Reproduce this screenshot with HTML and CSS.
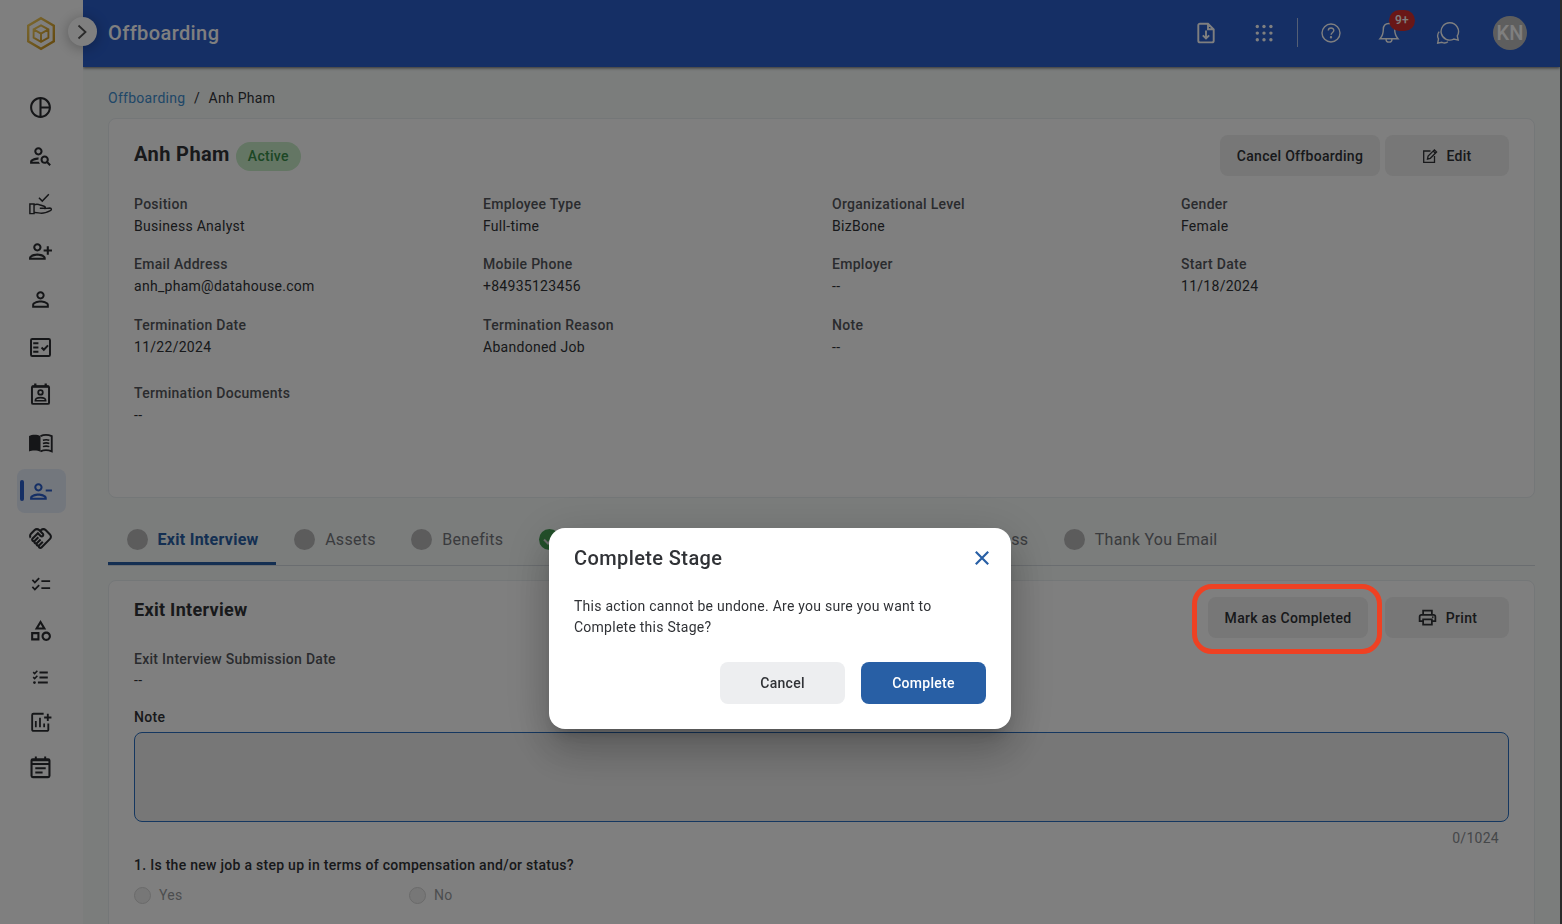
FILE: index.html
```html
<!DOCTYPE html>
<html lang="en">
<head>
    <meta charset="UTF-8">
    <meta name="viewport" content="width=device-width, initial-scale=1.0">
    <title>Offboarding</title>
    <link rel="stylesheet" href="styles.css">
</head>
<body>
    <div class="app">
        <aside class="sidebar">
            <div class="logo">
                <svg width="30" height="35" viewBox="0 0 30 35" fill="none">
                    <defs>
                        <linearGradient id="gold" x1="0" y1="0" x2="1" y2="1">
                            <stop offset="0" stop-color="#f5d060"/>
                            <stop offset="1" stop-color="#c8901c"/>
                        </linearGradient>
                    </defs>
                    <path d="M15 2.2 27.8 9.6v15.8L15 32.8 2.2 25.4V9.6z" stroke="url(#gold)" stroke-width="2.4"/>
                    <path d="M15 9.3 22.4 13.4v8.2L15 25.8 7.6 21.6v-8.2zM7.6 13.4 15 17.6l7.4-4.2M15 17.6v8.2" stroke="url(#gold)" stroke-width="1.9"/>
                </svg>
            </div>
            <nav class="menu">
                <a class="menu-item"><svg class="icon" viewBox="0 0 24 24"><path d="M12 2C6.48 2 2 6.48 2 12s4.480 10 10 10 10-4.480 10-10S17.520 2 12 2zm1 2.070c3.610.450 6.480 3.330 6.930 6.930H13V4.070zM4 12c0-4.060 3.070-7.440 7-7.930v15.870c-3.930-.500-7-3.880-7-7.940zm9 7.930V13h6.930c-.450 3.610-3.320 6.480-6.930 6.930z"/></svg></a>
                <a class="menu-item"><svg class="icon" viewBox="0 0 24 24"><path d="M10 12c2.21 0 4-1.79 4-4s-1.79-4-4-4-4 1.790-4 4 1.790 4 4 4zm0-6c1.100 0 2 .900 2 2s-.900 2-2 2-2-.900-2-2 .900-2 2-2zM4 18c.220-.720 3.310-2 6-2 0-.700.130-1.370.350-1.990C7.620 13.910 2 15.270 2 18v2h9.540c-.520-.580-.930-1.250-1.190-2H4zm15.430.020c.360-.590.570-1.280.570-2.020 0-2.210-1.790-4-4-4s-4 1.790-4 4 1.790 4 4 4c.740 0 1.430-.220 2.020-.570L20.590 22 22 20.590l-2.570-2.570zM16 18c-1.100 0-2-.900-2-2s.900-2 2-2 2 .900 2 2-.900 2-2 2z"/></svg></a>
                <a class="menu-item"><svg class="icon line" viewBox="0 0 24 24"><path d="M1.800 12.500h4v9.200h-4zM5.800 13.300c2-.800 4-.800 6 .200l3.700 1.100c1.500.500 1.300 2-.200 2h-4M15.500 16.900l5.500-.500c1.700 0 2 1.700.500 2.400-3 1.500-5.500 2.600-8.500 2.600-2.500 0-4.500-1-7.200-.700M10.500 6.500l3.200 3.200 6.300-6.500"/></svg></a>
                <a class="menu-item"><svg class="icon" viewBox="0 0 24 24"><path d="M13 8c0-2.210-1.790-4-4-4S5 5.790 5 8s1.790 4 4 4 4-1.790 4-4zm-2 0c0 1.100-.900 2-2 2s-2-.900-2-2 .900-2 2-2 2 .900 2 2zM1 18v2h16v-2c0-2.660-5.330-4-8-4s-8 1.340-8 4zm2 0c.200-.710 3.300-2 6-2 2.690 0 5.770 1.280 6 2H3zm17-3v-3h3v-2h-3V7h-2v3h-3v2h3v3h2z"/></svg></a>
                <a class="menu-item"><svg class="icon" viewBox="0 0 24 24"><path d="M12 5.900c1.160 0 2.100.940 2.100 2.100s-.940 2.100-2.100 2.100S9.900 9.160 9.900 8s.940-2.100 2.100-2.100m0 9c2.970 0 6.100 1.460 6.100 2.100v1.100H5.900V17c0-.640 3.130-2.100 6.100-2.100M12 4C9.790 4 8 5.790 8 8s1.790 4 4 4 4-1.790 4-4-1.790-4-4-4zm0 9c-2.670 0-8 1.340-8 4v3h16v-3c0-2.660-5.330-4-8-4z"/></svg></a>
                <a class="menu-item"><svg class="icon line" viewBox="0 0 24 24"><rect x="2.900" y="3.900" width="18.200" height="16.200" rx="1.200" stroke-width="1.900"/><path d="M5 8h5M5 12h5M5 16h5M13 12l2.200 2.200 4-4.200" stroke-width="1.900"/></svg></a>
                <a class="menu-item lift"><svg class="icon line" viewBox="0 0 24 24"><rect x="3.800" y="4" width="16.400" height="17" rx="1.200" stroke-width="1.900"/><path d="M7 1.500V4M17 1.500V4M4 4.500h16" stroke-width="2.200"/><circle cx="12" cy="10" r="2.200" stroke-width="1.700"/><path d="M7 18c0-2 2.500-3 5-3s5 1 5 3z" stroke-width="1.500"/></svg></a>
                <a class="menu-item"><svg class="icon line" viewBox="0 0 24 24"><path d="M1 4.800C4 3.300 9 3.300 12 5v15c-3-1.700-8-1.700-11-.300z" fill="currentColor" stroke="none"/><path d="M12 5c3-1.500 7.500-1.500 10.800 0v14.500c-3.300-1.300-7.800-1.300-10.800 0" stroke-width="1.800"/><path d="M14.300 8.800c2-.600 4.300-.600 6.200 0M14.300 11.900c2-.600 4.300-.600 6.200 0M14.300 15c2-.600 4.300-.600 6.200 0" stroke-width="1.500"/></svg></a>
                <a class="menu-item active"><svg class="icon" viewBox="0 0 24 24"><path d="M14 8c0-2.210-1.790-4-4-4S6 5.790 6 8s1.790 4 4 4 4-1.790 4-4zm-2 0c0 1.100-.900 2-2 2s-2-.900-2-2 .900-2 2-2 2 .900 2 2zM2 18v2h16v-2c0-2.660-5.330-4-8-4s-8 1.340-8 4zm2 0c.200-.710 3.300-2 6-2 2.690 0 5.770 1.280 6 2H4zM17 10v2h6v-2z"/></svg></a>
                <a class="menu-item small"><svg class="icon" viewBox="0 0 24 24"><path d="M12.220 19.850c-.180.180-.500.210-.710 0-.180-.180-.210-.500 0-.710l3.390-3.390-1.410-1.410-3.390 3.390c-.190.200-.510.190-.710 0-.210-.210-.180-.530 0-.710l3.390-3.390-1.410-1.410-3.390 3.390c-.180.180-.500.210-.710 0-.190-.190-.190-.510 0-.710l3.390-3.390L9.240 10.100l-3.390 3.390c-.180.180-.500.210-.710 0-.190-.200-.190-.510 0-.710L9.520 8.400l1.870 1.860c.950.950 2.590.940 3.540 0 .980-.980.980-2.560 0-3.540l-1.860-1.860.280-.280c.780-.780 2.050-.780 2.830 0l4.240 4.240c.780.780.780 2.050 0 2.830zM21.830 13.070c1.560-1.560 1.560-4.090 0-5.660l-4.240-4.240c-1.560-1.560-4.090-1.560-5.660 0l-.280.280-.280-.280c-1.560-1.560-4.090-1.560-5.660 0L2.170 6.710c-1.420 1.420-1.550 3.630-.400 5.190l1.450-1.450c-.390-.750-.260-1.700.370-2.330l3.540-3.540c.780-.780 2.050-.780 2.830 0l3.560 3.560c.180.180.210.500 0 .710-.210.210-.530.180-.710 0L9.520 5.570l-5.800 5.790c-.980.970-.980 2.560 0 3.540.390.390.890.630 1.420.700.070.520.300 1.020.700 1.420.400.400.900.630 1.420.700.070.520.300 1.020.700 1.420.400.400.900.630 1.420.700.070.540.310 1.030.700 1.420.470.470 1.100.730 1.770.730s1.300-.260 1.770-.730z"/></svg></a>
                <a class="menu-item small"><svg class="icon icon-sm" viewBox="0 0 24 24"><path d="M23 7h-10v2h10V7zm0 8h-10v2h10v-2zM5.540 11L2 7.460l1.410-1.410 2.120 2.120 4.240-4.240 1.410 1.410L5.540 11zm0 8L2 15.460l1.410-1.410 2.120 2.120 4.240-4.240 1.410 1.410L5.540 19z"/></svg></a>
                <a class="menu-item small"><svg class="icon" viewBox="0 0 24 24"><path d="M12 2l-5.500 9h11L12 2zm0 3.840L13.930 9h-3.870L12 5.840zM17.500 13c-2.490 0-4.500 2.010-4.500 4.500s2.010 4.500 4.500 4.500 4.500-2.010 4.500-4.500-2.010-4.500-4.500-4.500zm0 7c-1.380 0-2.500-1.120-2.500-2.500s1.120-2.500 2.500-2.500 2.500 1.120 2.500 2.500-1.120 2.500-2.500 2.500zM3 21.500h8v-8H3v8zm2-6h4v4H5v-4z"/></svg></a>
                <a class="menu-item small"><svg class="icon line" viewBox="0 0 24 24"><path d="M11 8.200h8M11 13h8M9.500 17.800H19" stroke-width="1.900"/><path d="M5 7.800l1.400 1.400L9 6.500M5 12.600l1.400 1.400L9 11.300" stroke-width="1.500"/><circle cx="6.200" cy="17.800" r="1.300" fill="currentColor" stroke="none"/></svg></a>
                <a class="menu-item small lift"><svg class="icon line" viewBox="0 0 24 24"><path d="M15 4.500H5.200a1.200 1.200 0 0 0-1.200 1.200v14.100a1.200 1.200 0 0 0 1.200 1.200h13.100a1.200 1.200 0 0 0 1.200-1.200V14M19 4.500v7M15.500 8.200h7" stroke-width="1.800"/><path d="M7.500 11.500v6M11.500 8.500v9M15.500 14v3.500" stroke-width="1.700"/></svg></a>
                <a class="menu-item small lift"><svg class="icon line" viewBox="0 0 24 24"><rect x="3.400" y="4" width="17.200" height="17.200" rx="1.200" stroke-width="2"/><path d="M7.500 1.500V4M16.500 1.500V4M3.500 5h17M3.500 8.700h17M7 12.800h10M7 16.800h7" stroke-width="1.900"/></svg></a>
            </nav>
            <button class="toggle" aria-label="Expand menu">
                <svg width="16" height="16" viewBox="0 0 16 16" fill="none" stroke="#555" stroke-width="1.800"><path d="M4.500 1.500 11.500 8l-7 6.500"/></svg>
            </button>
        </aside>

        <div class="main">
            <header class="topbar">
                <h1>Offboarding</h1>
                <div class="actions">
                    <svg width="24" height="24" viewBox="0 0 24 24" stroke-width="1.900"><path d="M14 2.700H6A1.700 1.700 0 0 0 4.300 4.400v15.300A1.700 1.700 0 0 0 6 21.400h12a1.700 1.700 0 0 0 1.700-1.700V8.300zM14 3v5.300h5.500M12 9.500v8M8.800 14.300l3.200 3.200 3.200-3.200"/></svg>
                    <svg class="dots" width="24" height="24" viewBox="0 0 24 24"><circle cx="5.300" cy="5.500" r="1.700"/><circle cx="12" cy="5.500" r="1.700"/><circle cx="18.900" cy="5.500" r="1.700"/><circle cx="5.300" cy="12.100" r="1.700"/><circle cx="12" cy="12.100" r="1.700"/><circle cx="18.900" cy="12.100" r="1.700"/><circle cx="5.300" cy="18.700" r="1.700"/><circle cx="12" cy="18.700" r="1.700"/><circle cx="18.900" cy="18.700" r="1.700"/></svg>
                    <span class="divider"></span>
                    <svg width="24" height="24" viewBox="0 0 24 24" stroke-width="1.400"><circle cx="12" cy="12" r="9"/><path d="M9.300 9.600c0-3.500 5.500-3.400 5.500-.200 0 2-2.700 2.100-2.700 4.300"/><circle cx="12" cy="16.300" r=".500"/></svg>
                    <div class="bell">
                        <svg width="24" height="24" viewBox="0 0 24 24" stroke-width="1.400"><path d="M12 2.500c-4 0-5.700 2.800-5.700 6 0 4.500-1.200 7-3.300 9.200h18c-2.100-2.200-3.300-4.700-3.300-9.200 0-3.200-1.700-6-5.700-6zM9 17.900c0 4.300 6 4.300 6 0"/></svg>
                        <span class="badge">9+</span>
                    </div>
                    <svg class="chat" width="24" height="24" viewBox="0 0 24 24" stroke-width="1.400"><path d="M13.700 1.700a8.700 8.700 0 1 0 4.100 16.400l4.400 1-.900-4.300A8.700 8.700 0 0 0 13.700 1.700z"/><path d="M3.200 10.600a6.600 6.600 0 0 0-.700 7.300l-.800 4.200 4.200-.800c2 .9 4.400.8 6-.500"/></svg>
                    <span class="avatar">KN</span>
                </div>
            </header>

            <div class="content">
                <div class="breadcrumb"><a>Offboarding</a><span>/</span><span>Anh Pham</span></div>

                <section class="card profile">
                    <div class="card-head">
                        <div class="title">
                            <h2>Anh Pham</h2>
                            <span class="status">Active</span>
                        </div>
                        <div class="buttons">
                            <button class="btn wide">Cancel Offboarding</button>
                            <button class="btn">
                                <svg width="16" height="16" viewBox="0 0 16 16" fill="none" stroke="currentColor" stroke-width="1.300"><path d="M8.500 3H1.700v11.300h10.800V8M5.500 11l.600-2.900 6.300-6.300 2.200 2.200-6.300 6.300zM11.200 3l2.200 2.200"/></svg>
                                Edit
                            </button>
                        </div>
                    </div>
                    <div class="fields">
                        <div class="field"><label>Position</label><p>Business Analyst</p></div>
                        <div class="field"><label>Employee Type</label><p>Full-time</p></div>
                        <div class="field"><label>Organizational Level</label><p>BizBone</p></div>
                        <div class="field"><label>Gender</label><p>Female</p></div>
                        <div class="field"><label>Email Address</label><p>anh_pham@datahouse.com</p></div>
                        <div class="field"><label>Mobile Phone</label><p>+84935123456</p></div>
                        <div class="field"><label>Employer</label><p>--</p></div>
                        <div class="field"><label>Start Date</label><p>11/18/2024</p></div>
                        <div class="field"><label>Termination Date</label><p>11/22/2024</p></div>
                        <div class="field"><label>Termination Reason</label><p>Abandoned Job</p></div>
                        <div class="field"><label>Note</label><p>--</p></div>
                    </div>
                    <div class="field documents"><label>Termination Documents</label><p>--</p></div>
                </section>

                <div class="tabs">
                    <a class="tab active"><i class="dot"></i>Exit Interview</a>
                    <a class="tab"><i class="dot"></i>Assets</a>
                    <a class="tab"><i class="dot"></i>Benefits</a>
                    <div class="tab-group">
                        <a class="tab"><i class="dot done"><svg width="21" height="21" viewBox="0 0 21 21" fill="none" stroke="#ddd" stroke-width="2"><path d="M5 10.500l4 4 7-7.500"/></svg></i></a>
                        <a class="tab">Access</a>
                    </div>
                    <a class="tab"><i class="dot"></i>Thank You Email</a>
                </div>

                <section class="card interview">
                    <div class="card-head">
                        <h3>Exit Interview</h3>
                        <div class="buttons">
                            <button class="btn wide">Mark as Completed</button>
                            <button class="btn">
                                <svg width="21" height="21" viewBox="0 0 24 24" fill="currentColor"><path d="M19 8h-1V3H6v5H5c-1.660 0-3 1.340-3 3v6h4v4h12v-4h4v-6c0-1.660-1.340-3-3-3zM8 5h8v3H8V5zm8 12v2H8v-4h8v2zm2-2v-2H6v2H4v-4c0-.550.450-1 1-1h14c.550 0 1 .450 1 1v4h-2z"/><circle cx="18" cy="11.500" r="1"/></svg>
                                Print
                            </button>
                        </div>
                    </div>
                    <div class="field"><label>Exit Interview Submission Date</label><p>--</p></div>
                    <label class="note-label">Note</label>
                    <div class="note"></div>
                    <div class="counter">0/1024</div>
                    <p class="question">1. Is the new job a step up in terms of compensation and/or status?</p>
                    <div class="options">
                        <span class="option"><i class="radio"></i>Yes</span>
                        <span class="option"><i class="radio"></i>No</span>
                    </div>
                </section>
            </div>
        </div>
    </div>

    <div class="overlay">
        <div class="modal">
            <div class="modal-head">
                <h2>Complete Stage</h2>
                <svg width="14" height="14" viewBox="0 0 14 14" fill="none" stroke="#285fa5" stroke-width="2.200"><path d="M.800.800l12.400 12.400M13.200.800L.800 13.200"/></svg>
            </div>
            <p>This action cannot be undone. Are you sure you want to Complete this Stage?</p>
            <div class="modal-buttons">
                <button class="btn">Cancel</button>
                <button class="btn primary">Complete</button>
            </div>
        </div>
    </div>
    <div class="highlight"></div>
</body>
</html>
```

FILE: styles.css
```css
* {
    box-sizing: border-box;
}
body {
    margin: 0;
    height: 924px;
    overflow: hidden;
    background-color: #2b2b2b;
    font-family: Roboto, "Liberation Sans", sans-serif;
    font-size: 14px;
    letter-spacing: 0.28px;
    color: #303236;
}
h1, h2, h3, p {
    margin: 0;
}
button {
    font-family: inherit;
    letter-spacing: inherit;
}
.app {
    display: flex;
    width: 1560px;
    height: 924px;
    overflow: hidden;
    background-color: #f6faf9;
}

/* sidebar */
.sidebar {
    position: relative;
    z-index: 2;
    width: 83px;
    flex-shrink: 0;
    background-color: #fff;
}
.logo {
    display: flex;
    justify-content: center;
    height: 83px;
    padding-top: 16px;
}
.menu-item {
    display: flex;
    align-items: center;
    justify-content: center;
    height: 48px;
    padding-right: 1px;
    color: #2b2c30;
    position: relative;
}
.menu-item.small {
    height: 46px;
}
.menu-item.lift {
    padding-bottom: 2px;
}
.menu-item.active {
    width: 49px;
    height: 44px;
    margin: 2px 0 2px 17px;
    border-radius: 8px;
    background-color: #e6eefb;
    color: #2a5ecb;
}
.menu-item.active::before {
    content: "";
    position: absolute;
    left: 3px;
    top: 11px;
    width: 4px;
    height: 21px;
    border-radius: 2px;
    background-color: #2a5ecb;
}
.icon {
    width: 25px;
    height: 25px;
    fill: currentColor;
}
.icon-sm {
    width: 21px;
    height: 21px;
}
.line {
    fill: none;
    stroke: currentColor;
    stroke-width: 1.4;
}
.logo svg, .icon {
    margin-right: 1px;
}
.toggle {
    position: absolute;
    left: 68px;
    top: 17px;
    width: 29px;
    height: 29px;
    padding: 0 2px 0 0;
    display: flex;
    align-items: center;
    justify-content: center;
    border: none;
    border-radius: 50%;
    background-color: #fff;
    box-shadow: 0 2px 14px rgba(0, 0, 0, 0.3);
}

/* top bar */
.main {
    flex: 1;
    min-width: 0;
}
.topbar {
    display: flex;
    align-items: center;
    justify-content: space-between;
    height: 67px;
    padding: 0 33px 2px 25px;
    background-color: #2a5ecb;
    color: #fff;
    box-shadow: 0 1px 3px rgba(0, 0, 0, 0.6);
}
.topbar h1 {
    font-size: 20px;
    font-weight: 500;
    letter-spacing: 0.4px;
}
.actions {
    display: flex;
    align-items: center;
    gap: 34px;
}
.actions svg {
    display: block;
    fill: none;
    stroke: #fff;
}
.actions .dots {
    fill: #fff;
    stroke: none;
}
.actions .chat {
    margin: 0 -1px 0 1px;
}
.divider {
    width: 1px;
    height: 29px;
    margin: 0 -13px;
    background-color: rgba(255, 255, 255, 0.6);
}
.bell {
    position: relative;
}
.badge {
    position: absolute;
    left: 12px;
    top: -11px;
    width: 26px;
    height: 21px;
    border-radius: 11px;
    background-color: #d32f2f;
    font-size: 12px;
    font-weight: 500;
    line-height: 21px;
    text-align: center;
}
.avatar {
    width: 34px;
    height: 34px;
    border-radius: 50%;
    background-color: #bdbdbd;
    font-size: 20px;
    font-weight: 500;
    letter-spacing: 0;
    line-height: 34px;
    text-align: center;
}

/* content */
.content {
    padding: 20px 25px 0;
}
.breadcrumb {
    display: flex;
    gap: 8.5px;
    height: 31px;
    line-height: 22px;
}
.breadcrumb a {
    color: #3f8fd0;
}
.card {
    padding: 16px 25px 0;
    border: 1px solid #e9eef0;
    border-radius: 8px;
    background-color: #fff;
}
.profile {
    height: 380px;
}
.card-head {
    display: flex;
    justify-content: space-between;
    height: 41px;
}
.title {
    display: flex;
    gap: 6px;
}
.title h2 {
    font-size: 20px;
    font-weight: 700;
    letter-spacing: 0.4px;
    line-height: 38px;
}
.status {
    height: 29px;
    margin-top: 7px;
    padding: 0 12px;
    border-radius: 15px;
    background-color: #c8ecc8;
    color: #388e4a;
    font-weight: 500;
    line-height: 29px;
}
.buttons {
    display: flex;
    gap: 5px;
}
.btn {
    display: flex;
    align-items: center;
    justify-content: center;
    gap: 8px;
    width: 124px;
    height: 41px;
    padding: 0;
    border: none;
    border-radius: 8px;
    background-color: #eee;
    color: #303236;
    font-size: 14px;
    font-weight: 500;
}
.btn.wide {
    width: 160px;
}
.fields {
    display: grid;
    grid-template-columns: repeat(4, 1fr);
    gap: 16.4px 21px;
    margin-top: 17px;
}
.field {
    line-height: 22px;
}
.field label {
    display: block;
    color: #55575c;
    font-weight: 500;
}
.documents {
    margin-top: 24px;
}

/* tabs */
.tabs {
    display: flex;
    height: 52px;
    margin: 16px 0 14px;
    border-bottom: 1px solid #d5dbe0;
}
.tab {
    display: flex;
    align-items: center;
    padding: 0 17px 0 18.5px;
    font-size: 16px;
    color: #74777c;
}
.tab.active {
    border-bottom: 3px solid #285fa5;
    padding-top: 3px;
    color: #285fa5;
    font-weight: 700;
}
.tab-group {
    display: flex;
    justify-content: space-between;
    width: 525px;
}
.dot {
    width: 21px;
    height: 21px;
    margin-right: 10px;
    border-radius: 50%;
    background-color: #b8b8b8;
}
.dot.done {
    background-color: #46a055;
}
.dot svg {
    display: block;
}

/* interview form */
.interview {
    height: 400px;
}
.interview .buttons {
    gap: 17px;
}
.interview h3 {
    font-size: 18px;
    font-weight: 700;
    letter-spacing: 0.3px;
    line-height: 26px;
}
.interview .field {
    margin-top: 10px;
}
.interview .field p {
    margin-top: -1px;
}
.note-label {
    display: block;
    margin-top: 15px;
    font-weight: 500;
    line-height: 22px;
}
.note {
    height: 90px;
    margin-top: 4px;
    border: 1px solid #2a6fc0;
    border-radius: 8px;
    background-color: #efefef;
}
.counter {
    padding-right: 10px;
    color: #8b8e92;
    line-height: 32px;
    text-align: right;
}
.question {
    font-weight: 500;
    line-height: 22px;
}
.options {
    display: flex;
    margin-top: 8px;
}
.option {
    display: flex;
    align-items: center;
    width: 275px;
    line-height: 22px;
    color: #999b9e;
}
.radio {
    width: 17px;
    height: 17px;
    margin: 1px 8px 0 0;
    border: 1px solid #d5d5d5;
    border-radius: 50%;
    background-color: #eee;
}

/* dialog */
.overlay {
    position: fixed;
    inset: 0 2px 0 0;
    z-index: 10;
    display: flex;
    align-items: flex-start;
    justify-content: center;
    padding-top: 528px;
    background-color: rgba(0, 0, 0, 0.5);
}
.modal {
    width: 462px;
    height: 201px;
    padding: 17px 25px 0;
    border-radius: 16px;
    background-color: #fff;
    box-shadow: 0 11px 15px -7px rgba(0, 0, 0, 0.2), 0 24px 38px 3px rgba(0, 0, 0, 0.14), 0 9px 46px 8px rgba(0, 0, 0, 0.12);
}
.modal-head {
    display: flex;
    align-items: center;
    justify-content: space-between;
    height: 26px;
}
.modal-head svg {
    margin: -1px -3px 0 0;
}
.modal h2 {
    font-size: 20px;
    font-weight: 500;
    letter-spacing: 0.4px;
}
.modal p {
    margin-top: 25px;
    letter-spacing: 0.25px;
    line-height: 21px;
}
.modal-buttons {
    display: flex;
    justify-content: flex-end;
    gap: 16px;
    margin-top: 24px;
}
.modal-buttons .btn {
    width: 125px;
    height: 42px;
    background-color: #edeef0;
}
.modal-buttons .btn.primary {
    background-color: #285fa5;
    color: #fff;
}
.highlight {
    position: fixed;
    left: 1192px;
    top: 584px;
    z-index: 11;
    width: 190px;
    height: 70px;
    border: 5px solid #ee4123;
    border-radius: 20px;
}
```
